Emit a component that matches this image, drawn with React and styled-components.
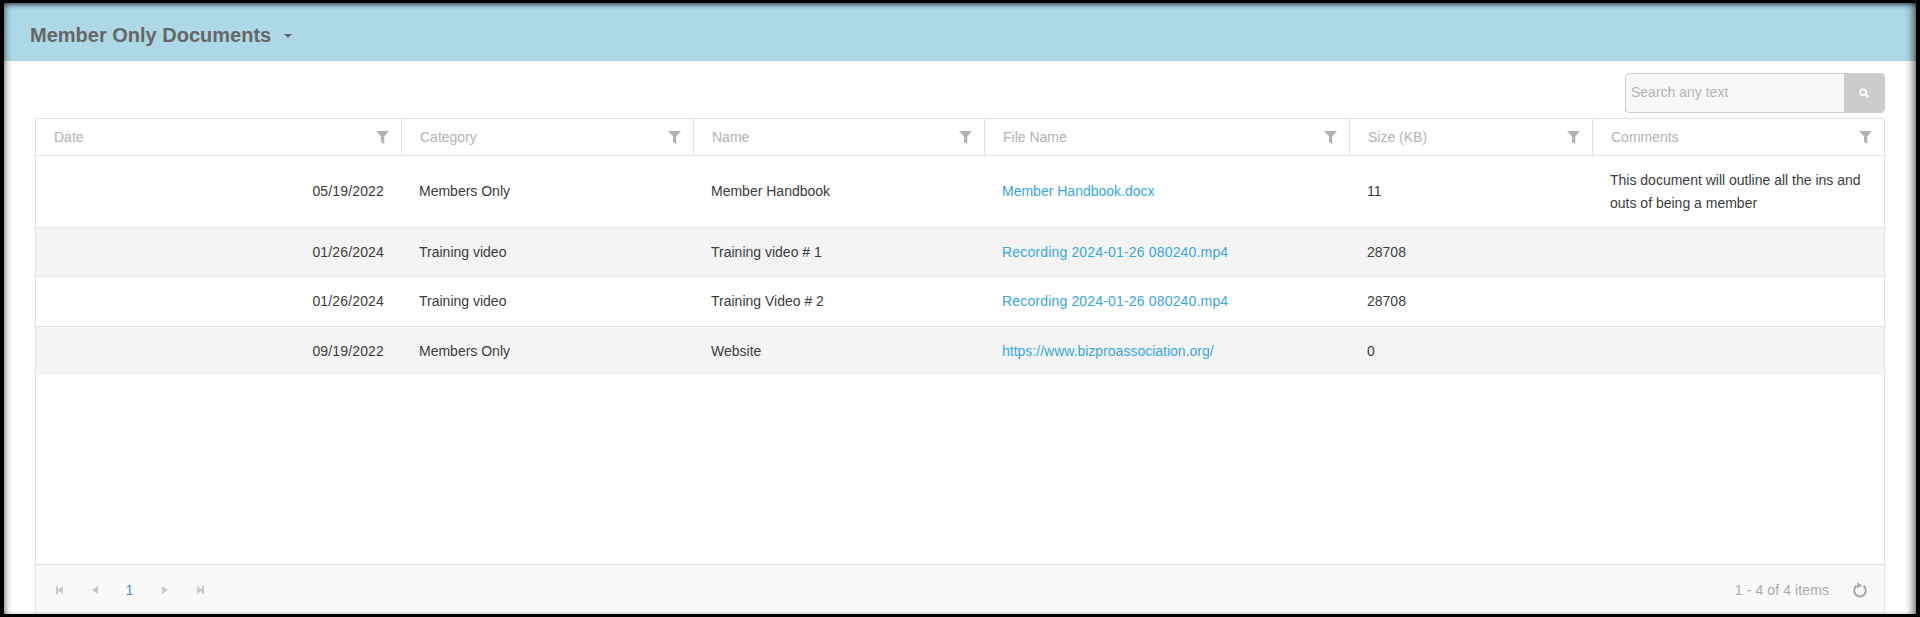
import React from 'react';
import styled, { createGlobalStyle } from 'styled-components';

const GlobalStyle = createGlobalStyle`
    html, body {
        margin: 0;
        padding: 0;
        background: #000;
    }
`;

const Frame = styled.div`
    box-sizing: border-box;
    width: 1920px;
    height: 617px;
    padding: 3px 4px 3px 4px;
    background: #000;
    font-family: 'Liberation Sans', Arial, sans-serif;
    font-size: 14px;
    color: #3c3c3c;
`;

const Panel = styled.div`
    position: relative;
    display: flex;
    flex-direction: column;
    height: 100%;
    background: #fff;
    overflow: hidden;

    &::after {
        content: '';
        position: absolute;
        inset: 0;
        pointer-events: none;
        box-shadow: inset 0 4px 5px -2px rgba(0, 0, 0, 0.55), inset 5px 0 6px -3px rgba(0, 0, 0, 0.4), inset -8px 0 7px -4px rgba(0, 0, 0, 0.45);
    }
`;

const TitleBar = styled.div`
    box-sizing: border-box;
    display: flex;
    align-items: center;
    gap: 13px;
    flex: none;
    height: 58px;
    padding: 6px 0 0 26px;
    background: #add8e6;
`;

const Title = styled.span`
    font-size: 20px;
    font-weight: bold;
    color: #666;
`;

const Caret = styled.span`
    width: 0;
    height: 0;
    margin-top: 2px;
    border-left: 4px solid transparent;
    border-right: 4px solid transparent;
    border-top: 4px solid #666;
`;

const Body = styled.div`
    display: flex;
    flex-direction: column;
    flex: 1;
    min-height: 0;
    padding: 12px 31px 0 31px;
`;

const Toolbar = styled.div`
    display: flex;
    justify-content: flex-end;
    flex: none;
    height: 45px;
`;

const SearchBox = styled.div`
    box-sizing: border-box;
    display: flex;
    width: 260px;
    height: 40px;
    border: 1px solid #ccc;
    border-radius: 4px;
    background: #f8f8f8;
    overflow: hidden;
`;

const SearchInput = styled.div`
    flex: 1;
    padding-left: 5px;
    line-height: 37px;
    font-size: 14px;
    color: #b5b5b5;
`;

const SearchButton = styled.div`
    display: flex;
    align-items: center;
    justify-content: center;
    width: 40px;
    background: #ccc;
`;

const Grid = styled.div`
    box-sizing: border-box;
    display: flex;
    flex-direction: column;
    flex: 1;
    min-height: 0;
    border: 1px solid #e2e2e2;
    border-bottom: none;
`;

const columns = '366px 292px 291px 365px 243px 1fr';

const HeaderRow = styled.div`
    box-sizing: border-box;
    display: grid;
    grid-template-columns: ${columns};
    flex: none;
    height: 37px;
    border-bottom: 1px solid #e2e2e2;
`;

const HeaderCell = styled.div`
    box-sizing: border-box;
    display: flex;
    align-items: center;
    justify-content: space-between;
    padding: 0 12px 0 18px;
    border-right: ${(p) => (p.$last ? 'none' : '1px solid #e2e2e2')};
    color: #b3b3b3;
`;

const Rows = styled.div`
    flex: 1;
    min-height: 0;
`;

const Row = styled.div`
    display: grid;
    grid-template-columns: ${columns};
    align-items: center;
    box-sizing: border-box;
    height: ${(p) => p.$height}px;
    background: ${(p) => (p.$alt ? '#f4f4f4' : '#fff')};
    border-bottom: ${(p) => (p.$noLine ? 'none' : '1px solid #e2e2e2')};
`;

const Cell = styled.div`
    padding: 0 ${(p) => (p.$right ? '18px' : '17px')};
    line-height: 23px;
    text-align: ${(p) => (p.$right ? 'right' : 'left')};
    letter-spacing: ${(p) => (p.$right ? '0.15px' : 'normal')};
`;

const FileLink = styled.a`
    color: #39a7e3;
    text-decoration: none;
    letter-spacing: ${(p) => (p.$digits ? '0.17px' : 'normal')};
`;

const Pager = styled.div`
    box-sizing: border-box;
    display: flex;
    align-items: center;
    flex: none;
    height: 50px;
    padding: 0 16px 0 6px;
    border-top: 1px solid #e2e2e2;
    background: #f9f9f9;
`;

const PagerButton = styled.span`
    display: flex;
    justify-content: center;
    width: 35px;
`;

const PageNumber = styled.span`
    width: 35px;
    text-align: center;
    color: #3d97cc;
`;

const PagerInfo = styled.span`
    margin-left: auto;
    margin-right: 23px;
    letter-spacing: 0.1px;
    color: #aaa;
`;

const FilterIcon = () => (
    <svg width="13" height="13" viewBox="0 0 13 13">
        <path d="M0 0h13L8.2 5.6V13L5 11V5.6z" fill="#b3b3b3" />
    </svg>
);

const SearchIcon = () => (
    <svg width="10" height="10" viewBox="0 0 10 10">
        <circle cx="4.2" cy="4.2" r="3" fill="none" stroke="#fff" strokeWidth="1.6" />
        <path d="M6.4 6.4l2.8 2.8" stroke="#fff" strokeWidth="2" />
    </svg>
);

const PagerIcon = ({ dir, end }) => (
    <svg width="8" height="8" viewBox="0 0 8 8">
        {dir === 'left' ? <path d="M7 0v8L1 4z" fill="#c8c8c8" /> : <path d="M1 0v8l6-4z" fill="#c8c8c8" />}
        {end && <rect x={dir === 'left' ? 0 : 6} y="0" width="2" height="8" fill="#c8c8c8" />}
    </svg>
);

const ReloadIcon = () => (
    <svg width="16" height="16" viewBox="0 0 16 16">
        <path d="M4.6 3.9A5.8 5.8 0 1 0 11.4 3.9" fill="none" stroke="#a8a8a8" strokeWidth="2" />
        <path d="M5.2 0.4l5 3.2-5 2.6z" fill="#a8a8a8" />
    </svg>
);

const headers = ['Date', 'Category', 'Name', 'File Name', 'Size (KB)', 'Comments'];

const docs = [
    { date: '05/19/2022', category: 'Members Only', name: 'Member Handbook', file: 'Member Handbook.docx', size: '11', comments: 'This document will outline all the ins and outs of being a member', height: 72 },
    { date: '01/26/2024', category: 'Training video', name: 'Training video # 1', file: 'Recording 2024-01-26 080240.mp4', digits: true, size: '28708', height: 49 },
    { date: '01/26/2024', category: 'Training video', name: 'Training Video # 2', file: 'Recording 2024-01-26 080240.mp4', digits: true, size: '28708', height: 50 },
    { date: '09/19/2022', category: 'Members Only', name: 'Website', file: 'https://www.bizproassociation.org/', size: '0', height: 48 },
];

export default function App() {
    return (
        <Frame>
            <GlobalStyle />
            <Panel>
                <TitleBar>
                    <Title>Member Only Documents</Title>
                    <Caret />
                </TitleBar>
                <Body>
                    <Toolbar>
                        <SearchBox>
                            <SearchInput>Search any text</SearchInput>
                            <SearchButton>
                                <SearchIcon />
                            </SearchButton>
                        </SearchBox>
                    </Toolbar>
                    <Grid>
                        <HeaderRow>
                            {headers.map((h, i) => (
                                <HeaderCell key={h} $last={i === headers.length - 1}>
                                    {h}
                                    <FilterIcon />
                                </HeaderCell>
                            ))}
                        </HeaderRow>
                        <Rows>
                            {docs.map((d, i) => (
                                <Row key={d.name} $height={d.height} $alt={i % 2 === 1} $noLine={i === docs.length - 1}>
                                    <Cell $right>{d.date}</Cell>
                                    <Cell>{d.category}</Cell>
                                    <Cell>{d.name}</Cell>
                                    <Cell>
                                        <FileLink href="#" $digits={d.digits}>{d.file}</FileLink>
                                    </Cell>
                                    <Cell>{d.size}</Cell>
                                    <Cell>{d.comments}</Cell>
                                </Row>
                            ))}
                        </Rows>
                        <Pager>
                            <PagerButton>
                                <PagerIcon dir="left" end />
                            </PagerButton>
                            <PagerButton>
                                <PagerIcon dir="left" />
                            </PagerButton>
                            <PageNumber>1</PageNumber>
                            <PagerButton>
                                <PagerIcon dir="right" />
                            </PagerButton>
                            <PagerButton>
                                <PagerIcon dir="right" end />
                            </PagerButton>
                            <PagerInfo>1 - 4 of 4 items</PagerInfo>
                            <ReloadIcon />
                        </Pager>
                    </Grid>
                </Body>
            </Panel>
        </Frame>
    );
}
